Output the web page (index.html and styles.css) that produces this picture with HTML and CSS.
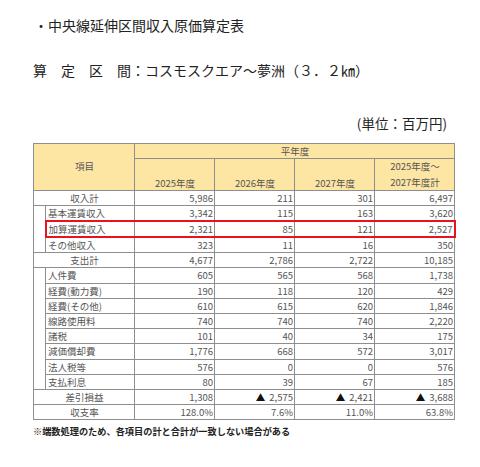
FILE: index.html
```html
<!DOCTYPE html>
<html lang="ja">
<head>
  <meta charset="UTF-8" />
  <meta name="viewport" content="width=device-width, initial-scale=1.0"/>
  <title>中央線延伸区間収入原価算定表</title>
  <link rel="stylesheet" href="styles.css">
</head>
<body>
  <div class="page">
    <p class="title">・中央線延伸区間収入原価算定表</p>
    <p class="section">算　定　区　間：コスモスクエア～夢洲（３．２㎞）</p>
    <p class="unit">(単位：百万円)</p>

    <table class="calc">
      <colgroup>
        <col class="c-indent">
        <col class="c-label">
        <col class="c-num">
        <col class="c-num">
        <col class="c-num">
        <col class="c-num">
      </colgroup>
      <thead>
        <tr class="h1">
          <th colspan="2" rowspan="2" class="mid">項目</th>
          <th colspan="4">平年度</th>
        </tr>
        <tr class="h2">
          <th>2025年度</th>
          <th>2026年度</th>
          <th>2027年度</th>
          <th class="mid">2025年度～<br>2027年度計</th>
        </tr>
      </thead>
      <tbody>
        <tr>
          <td colspan="2" class="total">収入計</td>
          <td>5,986</td><td>211</td><td>301</td><td>6,497</td>
        </tr>
        <tr>
          <td rowspan="3" class="indent"></td>
          <td class="sub">基本運賃収入</td>
          <td>3,342</td><td>115</td><td>163</td><td>3,620</td>
        </tr>
        <tr class="mark">
          <td class="sub">加算運賃収入</td>
          <td>2,321</td><td>85</td><td>121</td><td>2,527</td>
        </tr>
        <tr>
          <td class="sub">その他収入</td>
          <td>323</td><td>11</td><td>16</td><td>350</td>
        </tr>
        <tr>
          <td colspan="2" class="total">支出計</td>
          <td>4,677</td><td>2,786</td><td>2,722</td><td>10,185</td>
        </tr>
        <tr>
          <td rowspan="8" class="indent"></td>
          <td class="sub">人件費</td>
          <td>605</td><td>565</td><td>568</td><td>1,738</td>
        </tr>
        <tr>
          <td class="sub">経費(動力費)</td>
          <td>190</td><td>118</td><td>120</td><td>429</td>
        </tr>
        <tr>
          <td class="sub">経費(その他)</td>
          <td>610</td><td>615</td><td>620</td><td>1,846</td>
        </tr>
        <tr>
          <td class="sub">線路使用料</td>
          <td>740</td><td>740</td><td>740</td><td>2,220</td>
        </tr>
        <tr>
          <td class="sub">諸税</td>
          <td>101</td><td>40</td><td>34</td><td>175</td>
        </tr>
        <tr>
          <td class="sub">減価償却費</td>
          <td>1,776</td><td>668</td><td>572</td><td>3,017</td>
        </tr>
        <tr>
          <td class="sub">法人税等</td>
          <td>576</td><td>0</td><td>0</td><td>576</td>
        </tr>
        <tr>
          <td class="sub">支払利息</td>
          <td>80</td><td>39</td><td>67</td><td>185</td>
        </tr>
        <tr>
          <td colspan="2" class="total">差引損益</td>
          <td>1,308</td>
          <td><span class="neg">▲</span>2,575</td>
          <td><span class="neg">▲</span>2,421</td>
          <td><span class="neg">▲</span>3,688</td>
        </tr>
        <tr>
          <td colspan="2" class="total">収支率</td>
          <td>128.0%</td><td>7.6%</td><td>11.0%</td><td>63.8%</td>
        </tr>
      </tbody>
    </table>

    <p class="note">※端数処理のため、各項目の計と合計が一致しない場合がある</p>
  </div>
</body>
</html>
```

FILE: styles.css
```css
/* Base */
body {
  margin: 0;
  background-color: #fff;
  font-family: "Noto Sans CJK JP", "Noto Sans", sans-serif;
  color: #222;
}

.page {
  width: 422px;
  padding: 15px 0 0 33px;
}

p {
  margin: 0;
}

/* Headings */
.title {
  font-size: 14px;
  line-height: 20px;
  margin-left: 1px;
}

.section {
  font-size: 14px;
  line-height: 20px;
  margin-top: 25px;
}

.unit {
  font-size: 13.5px;
  line-height: 20px;
  text-align: right;
  padding-right: 8px;
  margin-top: 33px;
}

/* Table */
.calc {
  border-collapse: collapse;
  margin-top: 10px;
  width: 422px;
  table-layout: fixed;
  font-size: 9.5px;
  color: #555;
}

.c-indent { width: 12px; }
.c-label { width: 89px; }
.c-num { width: 80px; }

.calc th,
.calc td {
  border: 1px solid #8e8e8e;
  padding: 0 1px 0 2px;
  line-height: 14px;
  white-space: nowrap;
}

.calc th {
  background-color: #fde5a4;
  font-weight: normal;
  text-align: center;
  vertical-align: bottom;
  color: #555;
}

.calc th.mid {
  vertical-align: middle;
  line-height: 15.5px;
}

.calc .h1 { height: 15px; }
.calc .h2 { height: 30px; }

.calc tbody tr {
  height: 15.2px;
}

.calc td {
  text-align: right;
}

.calc td.total {
  text-align: center;
}

.calc td.sub {
  text-align: left;
}

.calc td.indent {
  padding: 0;
}

.neg {
  color: #111;
  margin-right: 4px;
}

/* Highlighted row */
.calc tr.mark td {
  border-top: 2px solid #e8141b;
  border-bottom: 2px solid #e8141b;
}

.calc tr.mark td.sub {
  border-left: 2px solid #e8141b;
}

.calc tr.mark td:last-child {
  border-right: 2px solid #e8141b;
}

/* Note */
.note {
  font-size: 9.2px;
  font-weight: bold;
  line-height: 14px;
  margin-top: 4px;
  color: #222;
}
```
